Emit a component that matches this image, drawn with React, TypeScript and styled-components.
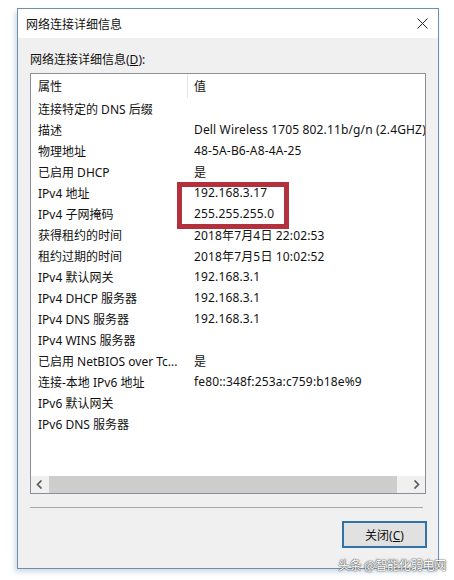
import React from "react";
import styled, { createGlobalStyle } from "styled-components";

const Global = createGlobalStyle`
  html, body { margin: 0; padding: 0; background: #ffffff; }
  body { font-family: "Noto Sans", "Noto Sans CJK SC", sans-serif; }
`;

const FONT = `"Noto Sans", "Noto Sans CJK SC", sans-serif`;

const Page = styled.div`
  position: relative;
  width: 454px;
  height: 580px;
  padding: 8px 0 0 17px;
  box-sizing: border-box;
`;

const Window = styled.div`
  width: 422px;
  height: 561px;
  box-sizing: border-box;
  border: 1px solid #6f8fb0;
  box-shadow: -2px 3px 5px rgba(120, 150, 180, 0.35);
  display: flex;
  flex-direction: column;
  background: #f0f0f0;
`;

const TitleBar = styled.div`
  height: 29px;
  background: #ffffff;
  display: flex;
  align-items: center;
  justify-content: space-between;
  padding: 0 10px 0 8px;
  font-family: ${FONT};
  font-size: 12px;
  color: #111;
`;

const CloseX = styled.svg`
  width: 11px;
  height: 11px;
`;

const Body = styled.div`
  flex: 1;
  display: flex;
  flex-direction: column;
  padding: 13px 12px 20px 12px;
  font-family: ${FONT};
  font-size: 12px;
  color: #111;
`;

const GroupLabel = styled.div`
  height: 17px;
  line-height: 17px;
  margin-bottom: 5px;
  u { text-decoration: underline; }
`;

const ListBox = styled.div`
  position: relative;
  width: 396px;
  height: 421px;
  box-sizing: border-box;
  border: 1px solid #8a8f97;
  background: #ffffff;
  display: flex;
  flex-direction: column;
`;

const Header = styled.div`
  display: grid;
  grid-template-columns: 157px 1fr;
  height: 24px;
`;

const HeaderCell = styled.div<{ $divider?: boolean }>`
  display: flex;
  align-items: center;
  padding-left: ${(p) => (p.$divider ? "7px" : "6px")};
  border-right: ${(p) => (p.$divider ? "1px solid #e5e5e5" : "none")};
  white-space: nowrap;
  overflow: hidden;
`;

const Rows = styled.div`
  flex: 1;
  overflow: hidden;
`;

const Row = styled.div`
  display: grid;
  grid-template-columns: 157px 1fr;
  height: 21px;
  align-items: center;
`;

const Cell = styled.div<{ $value?: boolean }>`
  padding-left: ${(p) => (p.$value ? "6px" : "7px")};
  letter-spacing: ${(p) => (p.$value ? "0.15px" : "0")};
  white-space: nowrap;
  overflow: hidden;
`;

const Highlight = styled.div`
  position: absolute;
  left: 146px;
  top: 108px;
  width: 112px;
  height: 47px;
  box-sizing: border-box;
  border: 5px solid #b3313c;
`;

const HScroll = styled.div`
  height: 17px;
  display: flex;
  align-items: center;
  background: #f0f0f0;
`;

const ScrollArrow = styled.div`
  width: 17px;
  height: 17px;
  display: flex;
  align-items: center;
  justify-content: center;
`;

const Track = styled.div`
  flex: 1;
  height: 17px;
  display: flex;
  align-items: stretch;
  padding-right: 11px;
`;

const Thumb = styled.div`
  flex: 1;
  margin-left: 1px;
  background: #cdcdcd;
`;

const Separator = styled.div`
  margin: 13px 3px 0 0;
  height: 1px;
  background: #a7a7a7;
`;

const Footer = styled.div`
  flex: 1;
  display: flex;
  justify-content: flex-end;
  align-items: flex-end;
`;

const Button = styled.button`
  width: 85px;
  height: 27px;
  box-sizing: border-box;
  border: 2px solid #2f73a8;
  background: #e1e1e1;
  font-family: ${FONT};
  font-size: 12px;
  color: #111;
  padding: 0;
  margin-right: -1px;
  u { text-decoration: underline; }
`;

const Watermark = styled.div`
  position: absolute;
  left: 338px;
  top: 556px;
  font-family: "Noto Sans CJK SC", sans-serif;
  font-size: 12px;
  color: #ffffff;
  letter-spacing: -0.2px;
  text-shadow: 0 0 1px #555, 0 0 1px #555, 0 0 2px #777;
  white-space: nowrap;
`;

const rows: [string, string][] = [
  ["连接特定的 DNS 后缀", ""],
  ["描述", "Dell Wireless 1705 802.11b/g/n (2.4GHZ)"],
  ["物理地址", "48-5A-B6-A8-4A-25"],
  ["已启用 DHCP", "是"],
  ["IPv4 地址", "192.168.3.17"],
  ["IPv4 子网掩码", "255.255.255.0"],
  ["获得租约的时间", "2018年7月4日 22:02:53"],
  ["租约过期的时间", "2018年7月5日 10:02:52"],
  ["IPv4 默认网关", "192.168.3.1"],
  ["IPv4 DHCP 服务器", "192.168.3.1"],
  ["IPv4 DNS 服务器", "192.168.3.1"],
  ["IPv4 WINS 服务器", ""],
  ["已启用 NetBIOS over Tc...", "是"],
  ["连接-本地 IPv6 地址", "fe80::348f:253a:c759:b18e%9"],
  ["IPv6 默认网关", ""],
  ["IPv6 DNS 服务器", ""],
];

export default function App() {
  return (
    <>
      <Global />
      <Page>
        <Window>
          <TitleBar>
            <span>网络连接详细信息</span>
            <CloseX viewBox="0 0 11 11">
              <path d="M0.5 0.5 L10.5 10.5 M10.5 0.5 L0.5 10.5" stroke="#222" strokeWidth="1" fill="none" />
            </CloseX>
          </TitleBar>
          <Body>
            <GroupLabel>
              网络连接详细信息(<u>D</u>):
            </GroupLabel>
            <ListBox>
              <Header>
                <HeaderCell $divider>属性</HeaderCell>
                <HeaderCell>值</HeaderCell>
              </Header>
              <Rows>
                {rows.map(([k, v]) => (
                  <Row key={k}>
                    <Cell>{k}</Cell>
                    <Cell $value>{v}</Cell>
                  </Row>
                ))}
              </Rows>
              <HScroll>
                <ScrollArrow>
                  <svg width="7" height="9" viewBox="0 0 7 9">
                    <path d="M5.5 0.5 L1.5 4.5 L5.5 8.5" stroke="#555" strokeWidth="1.6" fill="none" />
                  </svg>
                </ScrollArrow>
                <Track>
                  <Thumb />
                </Track>
                <ScrollArrow>
                  <svg width="7" height="9" viewBox="0 0 7 9">
                    <path d="M1.5 0.5 L5.5 4.5 L1.5 8.5" stroke="#555" strokeWidth="1.6" fill="none" />
                  </svg>
                </ScrollArrow>
              </HScroll>
              <Highlight />
            </ListBox>
            <Separator />
            <Footer>
              <Button>
                关闭(<u>C</u>)
              </Button>
            </Footer>
          </Body>
        </Window>
        <Watermark>头条 @智能化弱电网</Watermark>
      </Page>
    </>
  );
}
